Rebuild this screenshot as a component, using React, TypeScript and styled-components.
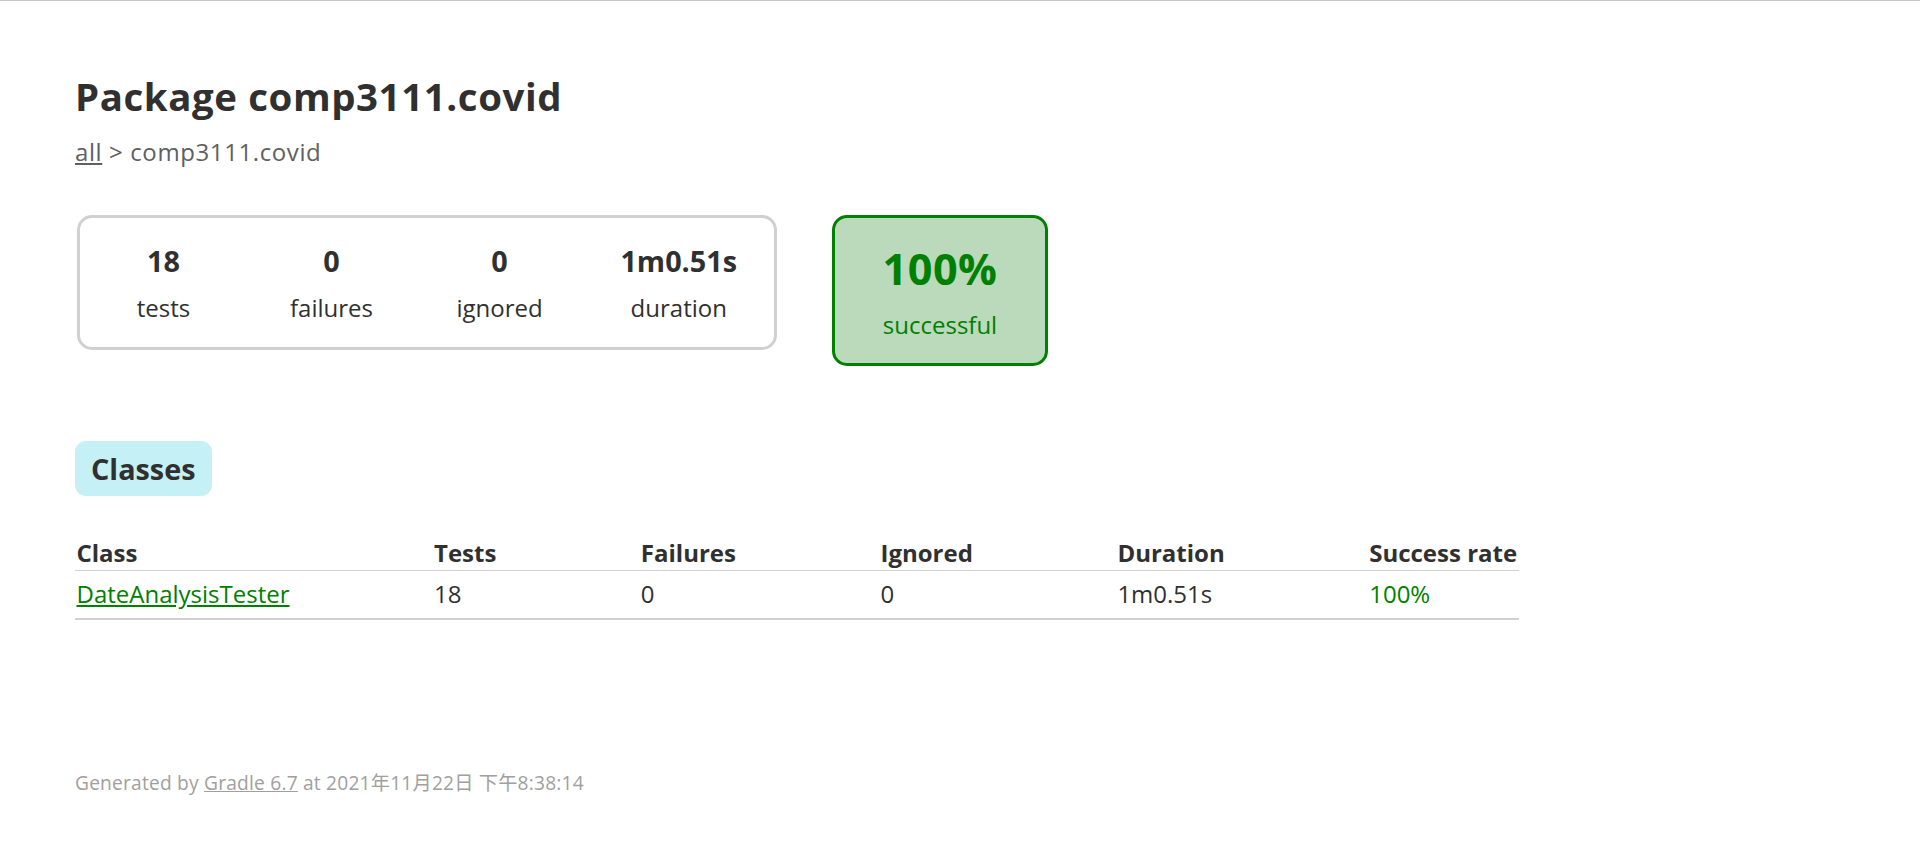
import React from "react";
import styled, { createGlobalStyle } from "styled-components";

const GlobalStyle = createGlobalStyle`
  html, body {
    margin: 0;
    padding: 0;
    background: #ffffff;
  }
  body {
    border-top: 1px solid #c8c8c8;
    font-family: "Open Sans", "Noto Sans", "Noto Sans CJK SC", sans-serif;
    font-size: 24px;
    line-height: 1.32;
    color: #303030;
  }
`;

const Content = styled.div`
  padding: 44px 75px 45px 75px;
`;

const Title = styled.h1`
  font-size: 38.4px;
  font-weight: 700;
  line-height: 1.32;
  letter-spacing: 0.6px;
  margin: 25.7px 0 15px 0;
  white-space: nowrap;
`;

const Breadcrumbs = styled.div`
  color: #606060;
  letter-spacing: 0.6px;
`;

const CrumbLink = styled.a`
  color: #606060;
  text-decoration: underline;
`;

const Summary = styled.div`
  display: flex;
  align-items: flex-start;
  margin: 46.5px 0 60px 1.5px;
`;

const SummaryGroup = styled.div`
  display: flex;
  border: 3px solid #d0d0d0;
  border-radius: 15px;
`;

const InfoBox = styled.div<{ $w: number }>`
  width: ${(p) => p.$w}px;
  padding: 24px 0;
  text-align: center;
`;

const Counter = styled.p`
  margin: 0 0 12px 0;
  font-size: 28.8px;
  font-weight: 700;
`;

const Label = styled.p`
  margin: 0;
`;

const SuccessRate = styled.div`
  width: 210px;
  margin-left: 55px;
  padding: 22.5px 0;
  text-align: center;
  border: 3px solid #008000;
  border-radius: 15px;
  background: #bbd9bb;
  color: #008000;
`;

const Percent = styled.p`
  margin: 0 0 12px 0;
  font-size: 43.2px;
  font-weight: 700;
  letter-spacing: 0.5px;
`;

const TabLinks = styled.ul`
  display: flex;
  list-style: none;
  margin: 0 0 24px 0;
  padding: 15px 0;
`;

const TabItem = styled.li<{ $selected?: boolean }>`
  padding: 7.5px 15px;
  margin-right: 37.5px;
  border-radius: 10.5px;
  border: 1.5px solid ${(p) => (p.$selected ? "#c5f0f5" : "#d4d4d4")};
  background: ${(p) => (p.$selected ? "#c5f0f5" : "#f0f0f0")};
`;

const TabTitle = styled.h2`
  margin: 0;
  padding: 0;
  font-size: 28.8px;
  font-weight: 700;
  line-height: 1.32;
  white-space: nowrap;
`;

const Table = styled.table`
  border-collapse: collapse;
  border-bottom: 2px solid #d0d0d0;
`;

const Th = styled.th`
  text-align: left;
  white-space: nowrap;
  font-weight: 700;
  padding: 1.5px 1.5px 1.5px 143px;
  border-bottom: 1px solid #d0d0d0;
  &:first-child {
    padding-left: 1.5px;
  }
`;

const Td = styled.td<{ $success?: boolean }>`
  white-space: nowrap;
  padding: 7.5px 1.5px 7.5px 143px;
  color: ${(p) => (p.$success ? "#008000" : "#303030")};
  &:first-child {
    padding-left: 1.5px;
  }
`;

const ClassLink = styled.a`
  color: #008000;
  text-decoration: underline;
`;

const Footer = styled.div`
  margin-top: 150px;
  font-size: 19.2px;
  letter-spacing: 0.2px;
  color: #a0a0a0;
  white-space: nowrap;
`;

const FooterLink = styled.a`
  color: #a0a0a0;
  text-decoration: underline;
`;

const stats = [
  { value: "18", label: "tests", w: 168 },
  { value: "0", label: "failures", w: 168 },
  { value: "0", label: "ignored", w: 168 },
  { value: "1m0.51s", label: "duration", w: 190.5 },
];

export default function App() {
  return (
    <>
      <GlobalStyle />
      <Content>
        <Title>Package comp3111.covid</Title>
        <Breadcrumbs>
          <CrumbLink href="#">all</CrumbLink> &gt; comp3111.covid
        </Breadcrumbs>
        <Summary>
          <SummaryGroup>
            {stats.map((s) => (
              <InfoBox key={s.label} $w={s.w}>
                <Counter>{s.value}</Counter>
                <Label>{s.label}</Label>
              </InfoBox>
            ))}
          </SummaryGroup>
          <SuccessRate>
            <Percent>100%</Percent>
            <Label>successful</Label>
          </SuccessRate>
        </Summary>
        <TabLinks>
          <TabItem $selected>
            <TabTitle>Classes</TabTitle>
          </TabItem>
        </TabLinks>
        <Table>
          <thead>
            <tr>
              <Th>Class</Th>
              <Th>Tests</Th>
              <Th>Failures</Th>
              <Th>Ignored</Th>
              <Th>Duration</Th>
              <Th>Success rate</Th>
            </tr>
          </thead>
          <tbody>
            <tr>
              <Td>
                <ClassLink href="#">DateAnalysisTester</ClassLink>
              </Td>
              <Td>18</Td>
              <Td>0</Td>
              <Td>0</Td>
              <Td>1m0.51s</Td>
              <Td $success>100%</Td>
            </tr>
          </tbody>
        </Table>
        <Footer>
          Generated by <FooterLink href="#">Gradle 6.7</FooterLink> at 2021年11月22日 下午8:38:14
        </Footer>
      </Content>
    </>
  );
}
